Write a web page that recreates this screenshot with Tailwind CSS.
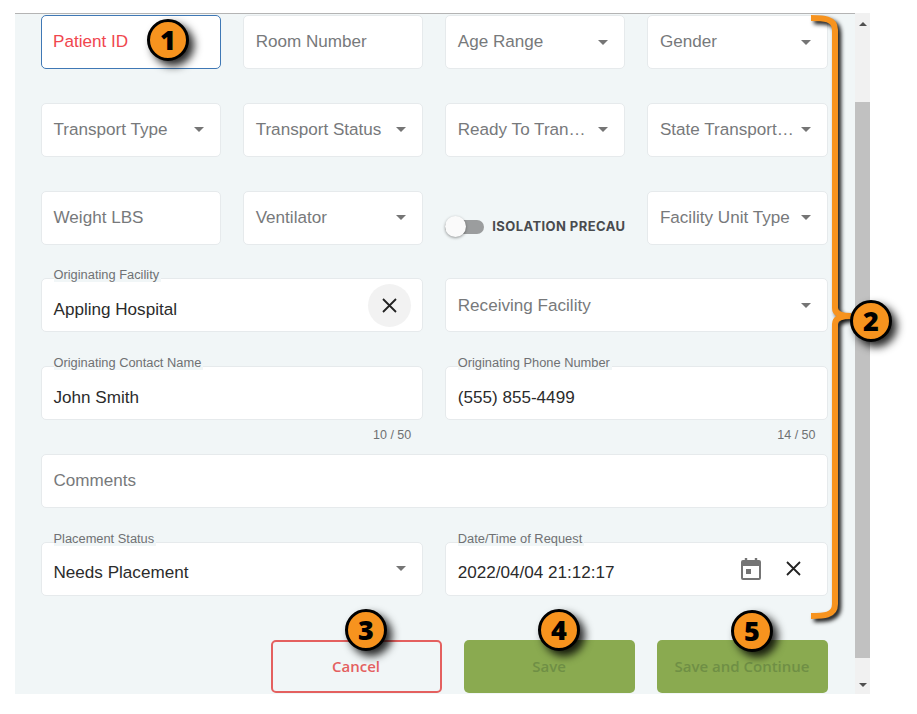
<!DOCTYPE html>
<html lang="en">
<head>
  <meta charset="UTF-8" />
  <title>Patient Transport</title>
  <script src="https://cdn.jsdelivr.net/npm/@tailwindcss/browser@4"></script>
</head>
<body class="bg-white">
  <div class="relative w-[917px] h-[714px] overflow-hidden font-['Liberation_Sans',sans-serif]">
    <div class="ml-[15px] pt-[13px] w-[855px] h-[694px] flex">
      <!-- form panel -->
      <div class="w-[840px] h-[681px] bg-[#f1f6f7] border-t border-[#b4b4b4] pt-[1px] pl-[26px] pr-[27.5px] overflow-hidden">
        <div class="grid grid-cols-4 gap-x-[22px] gap-y-[33.8px] auto-rows-[54px] text-[17.1px] text-[#77797b]">
          <div class="flex items-center bg-white border-[1.5px] border-[#3f78b5] rounded-[5px] px-[11px] text-[#f0464e]">Patient ID</div>
          <div class="flex items-center bg-white border border-[#e6eaec] rounded-[5px] px-[11.5px]">Room Number</div>
          <div class="flex items-center justify-between bg-white border border-[#e6eaec] rounded-[5px] pl-[11.5px] pr-[16px]"><span>Age Range</span><svg class="w-[10px] h-[5px]" viewBox="0 0 10 5"><path d="M0 0h10L5 5z" fill="#757575"/></svg></div>
          <div class="flex items-center justify-between bg-white border border-[#e6eaec] rounded-[5px] pl-[11.5px] pr-[16px]"><span>Gender</span><svg class="w-[10px] h-[5px]" viewBox="0 0 10 5"><path d="M0 0h10L5 5z" fill="#757575"/></svg></div>

          <div class="flex items-center justify-between bg-white border border-[#e6eaec] rounded-[5px] pl-[11.5px] pr-[16px]"><span>Transport Type</span><svg class="w-[10px] h-[5px]" viewBox="0 0 10 5"><path d="M0 0h10L5 5z" fill="#757575"/></svg></div>
          <div class="flex items-center justify-between bg-white border border-[#e6eaec] rounded-[5px] pl-[11.5px] pr-[16px]"><span>Transport Status</span><svg class="w-[10px] h-[5px]" viewBox="0 0 10 5"><path d="M0 0h10L5 5z" fill="#757575"/></svg></div>
          <div class="flex items-center justify-between bg-white border border-[#e6eaec] rounded-[5px] pl-[11.5px] pr-[16px]"><span>Ready To Tran…</span><svg class="w-[10px] h-[5px]" viewBox="0 0 10 5"><path d="M0 0h10L5 5z" fill="#757575"/></svg></div>
          <div class="flex items-center justify-between bg-white border border-[#e6eaec] rounded-[5px] pl-[11.5px] pr-[16px]"><span class="whitespace-nowrap">State Transport…</span><svg class="w-[10px] h-[5px] shrink-0" viewBox="0 0 10 5"><path d="M0 0h10L5 5z" fill="#757575"/></svg></div>

          <div class="flex items-center bg-white border border-[#e6eaec] rounded-[5px] px-[11.5px]">Weight LBS</div>
          <div class="flex items-center justify-between bg-white border border-[#e6eaec] rounded-[5px] pl-[11.5px] pr-[16px]"><span>Ventilator</span><svg class="w-[10px] h-[5px]" viewBox="0 0 10 5"><path d="M0 0h10L5 5z" fill="#757575"/></svg></div>
          <div class="flex items-center pt-[19px] whitespace-nowrap">
            <div class="relative w-[39px] h-[14px] rounded-full bg-[#9b9d9e] shrink-0">
              <div class="absolute left-0 top-[-4px] w-[21px] h-[21px] rounded-full bg-[#fafafa] shadow-[0_1px_3px_rgba(0,0,0,.4)]"></div>
            </div>
            <span class="ml-[8px] font-['Inter',sans-serif] font-bold text-[13px] tracking-[.42px] text-[#494b4e]">ISOLATION PRECAU</span>
          </div>
          <div class="flex items-center justify-between bg-white border border-[#e6eaec] rounded-[5px] pl-[11.5px] pr-[16px]"><span class="whitespace-nowrap">Facility Unit Type</span><svg class="w-[10px] h-[5px] shrink-0" viewBox="0 0 10 5"><path d="M0 0h10L5 5z" fill="#757575"/></svg></div>

          <div class="col-span-2 relative flex items-center justify-between bg-white border border-[#e6eaec] rounded-[5px] pl-[11.5px] pr-[11px]">
            <span class="absolute left-[11.5px] top-[-11px] pr-[2px] bg-[#f1f6f7] text-[12.85px] leading-[14px] text-[#6f7173]">Originating Facility</span>
            <span class="pt-[9px] text-[#2b2b2b]">Appling Hospital</span>
            <div class="w-[43px] h-[43px] rounded-full bg-[#f2f2f2] flex items-center justify-center">
              <svg class="w-[15px] h-[15px]" viewBox="0 0 15 15"><path d="M1 1l13 13M14 1L1 14" stroke="#222" stroke-width="1.8"/></svg>
            </div>
          </div>
          <div class="col-span-2 flex items-center justify-between bg-white border border-[#e6eaec] rounded-[5px] pl-[11.5px] pr-[16px]"><span>Receiving Facility</span><svg class="w-[10px] h-[5px]" viewBox="0 0 10 5"><path d="M0 0h10L5 5z" fill="#757575"/></svg></div>

          <div class="col-span-2">
            <div class="relative h-[54px] flex items-center bg-white border border-[#e6eaec] rounded-[5px] px-[11.5px]">
              <span class="absolute left-[11.5px] top-[-11px] pr-[2px] bg-[#f1f6f7] text-[12.85px] leading-[14px] text-[#6f7173]">Originating Contact Name</span>
              <span class="pt-[9px] text-[#2b2b2b]">John Smith</span>
            </div>
            <div class="mt-[8px] pr-3 text-right text-[12.5px] leading-[14px] text-[#6f7173]">10 / 50</div>
          </div>
          <div class="col-span-2">
            <div class="relative h-[54px] flex items-center bg-white border border-[#e6eaec] rounded-[5px] px-[11.5px]">
              <span class="absolute left-[11.5px] top-[-11px] pr-[2px] bg-[#f1f6f7] text-[12.85px] leading-[14px] text-[#6f7173]">Originating Phone Number</span>
              <span class="pt-[9px] text-[#2b2b2b]">(555) 855-4499</span>
            </div>
            <div class="mt-[8px] pr-3 text-right text-[12.5px] leading-[14px] text-[#6f7173]">14 / 50</div>
          </div>

          <div class="col-span-4 flex items-center bg-white border border-[#e6eaec] rounded-[5px] px-[11.5px]">Comments</div>

          <div class="col-span-2 relative flex items-center justify-between bg-white border border-[#e6eaec] rounded-[5px] pl-[11.5px] pr-[16px]">
            <span class="absolute left-[11.5px] top-[-11px] pr-[2px] bg-[#f1f6f7] text-[12.85px] leading-[14px] text-[#6f7173]">Placement Status</span>
            <span class="pt-[9px] text-[#2b2b2b]">Needs Placement</span>
            <svg class="w-[10px] h-[5px]" viewBox="0 0 10 5"><path d="M0 0h10L5 5z" fill="#757575"/></svg>
          </div>
          <div class="col-span-2 relative flex items-center justify-between bg-white border border-[#e6eaec] rounded-[5px] pl-[11.5px] pr-[26px]">
            <span class="absolute left-[11.5px] top-[-11px] pr-[2px] bg-[#f1f6f7] text-[12.85px] leading-[14px] text-[#6f7173]">Date/Time of Request</span>
            <span class="pt-[9px] text-[#2b2b2b]">2022/04/04 21:12:17</span>
            <div class="flex items-center gap-[25px]">
              <svg class="w-[20px] h-[22px]" viewBox="0 0 20 22"><path d="M5 0v3M15 0v3" stroke="#757575" stroke-width="2.4"/><path fill="#757575" d="M2 2h16a2 2 0 0 1 2 2v16a2 2 0 0 1-2 2H2a2 2 0 0 1-2-2V4a2 2 0 0 1 2-2zm0 6v12h16V8z"/><path fill="#757575" d="M5 11h5v5H5z"/></svg>
              <svg class="w-[15px] h-[15px]" viewBox="0 0 15 15"><path d="M1 1l13 13M14 1L1 14" stroke="#222" stroke-width="1.8"/></svg>
            </div>
          </div>
        </div>

        <div class="mt-[44px] flex justify-end gap-[22px] font-['Open_Sans',sans-serif] font-semibold text-[15px]">
          <button class="w-[171px] h-[53px] rounded-[5px] border-2 border-[#e4605f] text-[#e4605f]">Cancel</button>
          <button class="w-[171px] h-[53px] rounded-[5px] bg-[#8aaa50] text-[#6f8f45]">Save</button>
          <button class="w-[171px] h-[53px] rounded-[5px] bg-[#8aaa50] text-[#6f8f45]">Save and Continue</button>
        </div>
      </div>

      <!-- scrollbar -->
      <div class="w-[15px] h-[681px] bg-[#f1f1f1] flex flex-col">
        <div class="h-[89px] pt-[9px] flex justify-center items-start">
          <svg class="w-[8px] h-[4px]" viewBox="0 0 8 4"><path d="M0 4h8L4 0z" fill="#505050"/></svg>
        </div>
        <div class="h-[556px] bg-[#c1c1c1]"></div>
        <div class="flex-1 pt-[25px] flex justify-center items-start">
          <svg class="w-[8px] h-[4px]" viewBox="0 0 8 4"><path d="M0 0h8L4 4z" fill="#505050"/></svg>
        </div>
      </div>
    </div>

    <!-- callouts drawn over the screenshot -->
    <svg class="absolute left-[805px] top-[10px] w-[50px] h-[620px] drop-shadow-[3px_3px_2px_rgba(0,0,0,.95)]" viewBox="0 0 50 620">
      <path d="M6 8c12 0 24 0 24 12v278c0 5 4 8 16 8c-12 0-16 3-16 8v280c0 12-12 12-24 12" fill="none" stroke="#f7931e" stroke-width="6"/>
    </svg>
    <div class="absolute left-[147px] top-[19px] w-[42px] h-[42px] rounded-full bg-[#f7931e] border-[3px] border-black shadow-[5px_5px_9px_rgba(0,0,0,.85)] flex items-center justify-center font-['Open_Sans',sans-serif] font-extrabold text-[27px] text-black">1</div>
    <div class="absolute left-[850px] top-[300px] w-[42px] h-[42px] rounded-full bg-[#f7931e] border-[3px] border-black shadow-[5px_5px_9px_rgba(0,0,0,.85)] flex items-center justify-center font-['Open_Sans',sans-serif] font-extrabold text-[27px] text-black">2</div>
    <div class="absolute left-[345px] top-[609px] w-[42px] h-[42px] rounded-full bg-[#f7931e] border-[3px] border-black shadow-[5px_5px_9px_rgba(0,0,0,.85)] flex items-center justify-center font-['Open_Sans',sans-serif] font-extrabold text-[27px] text-black">3</div>
    <div class="absolute left-[538px] top-[609px] w-[42px] h-[42px] rounded-full bg-[#f7931e] border-[3px] border-black shadow-[5px_5px_9px_rgba(0,0,0,.85)] flex items-center justify-center font-['Open_Sans',sans-serif] font-extrabold text-[27px] text-black">4</div>
    <div class="absolute left-[731px] top-[610px] w-[42px] h-[42px] rounded-full bg-[#f7931e] border-[3px] border-black shadow-[5px_5px_9px_rgba(0,0,0,.85)] flex items-center justify-center font-['Open_Sans',sans-serif] font-extrabold text-[27px] text-black">5</div>
  </div>
</body>
</html>
